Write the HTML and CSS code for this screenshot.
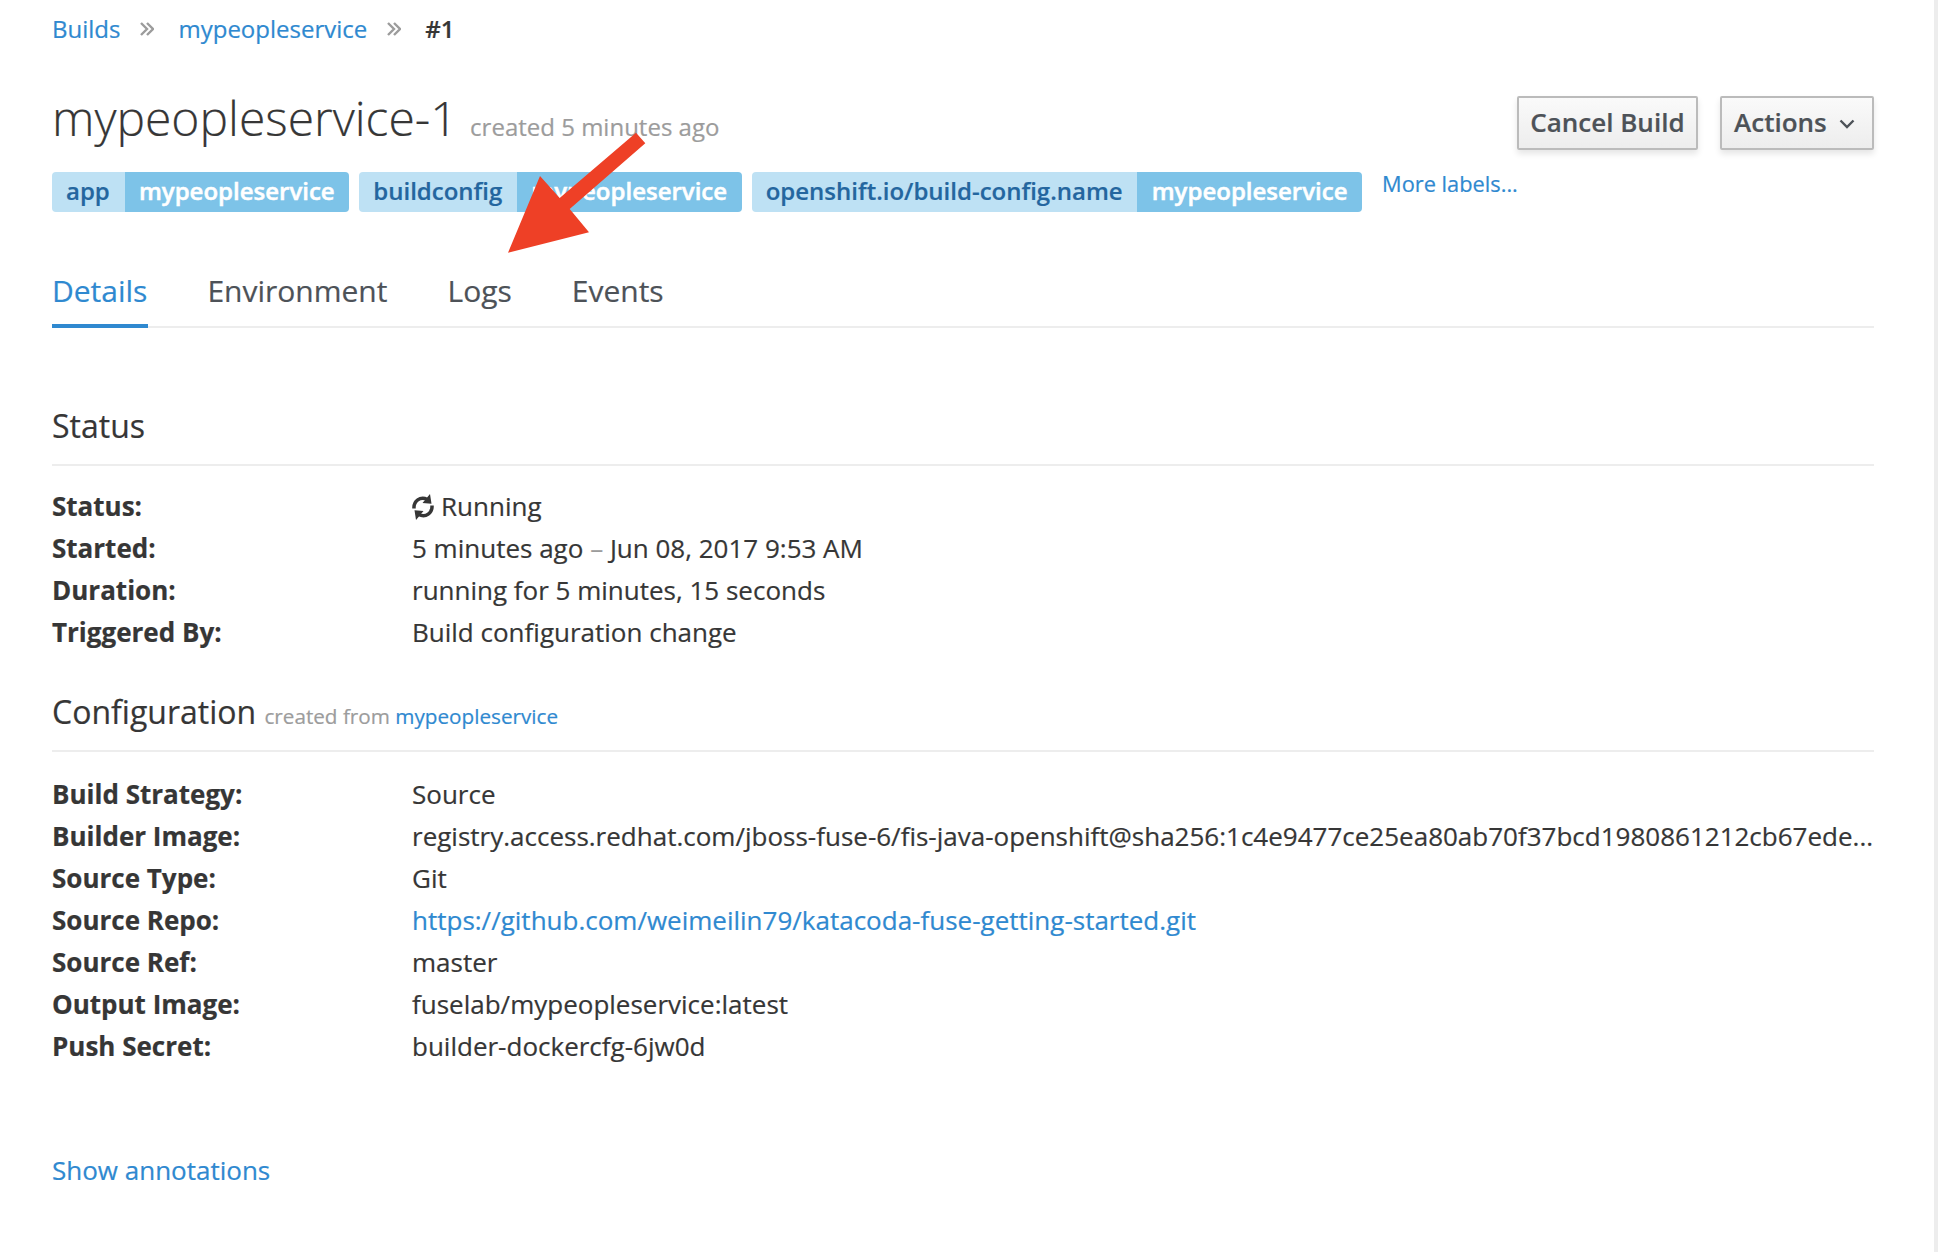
FILE: index.html
```html
<!DOCTYPE html>
<html lang="en">
<head>
<meta charset="utf-8">
<title>mypeopleservice-1</title>
<link rel="stylesheet" href="styles.css">
</head>
<body>
<main class="page">
  <nav class="breadcrumb">
    <a href="#">Builds</a>
    <svg class="sep" viewBox="0 0 14 14"><path d="M1 1l6 6-6 6M7 1l6 6-6 6"/></svg>
    <a href="#">mypeopleservice</a>
    <svg class="sep" viewBox="0 0 14 14"><path d="M1 1l6 6-6 6M7 1l6 6-6 6"/></svg>
    <strong>#1</strong>
  </nav>
  <header class="header">
    <h1 class="title">mypeopleservice-1 <small>created 5 minutes ago</small></h1>
    <div class="actions">
      <button class="btn">Cancel Build</button>
      <button class="btn menu">Actions <svg class="chevron" viewBox="0 0 16 10"><path d="M1.5 1.5L8 8l6.500-6.500"/></svg></button>
    </div>
  </header>
  <div class="labels">
    <span class="label"><span class="key">app</span><span class="val">mypeopleservice</span></span>
    <span class="label"><span class="key">buildconfig</span><span class="val">mypeopleservice</span></span>
    <span class="label"><span class="key">openshift.io/build-config.name</span><span class="val">mypeopleservice</span></span>
    <a class="more" href="#">More labels...</a>
  </div>
  <nav class="tabs">
    <a class="tab active" href="#">Details</a>
    <a class="tab" href="#">Environment</a>
    <a class="tab" href="#">Logs</a>
    <a class="tab" href="#">Events</a>
  </nav>
  <section class="section status">
    <h2>Status</h2>
    <dl>
      <dt>Status:</dt><dd><svg class="refresh" viewBox="0 0 22 26"><path class="arc" d="M2 14.500C1.500 7 8 2 15.500 5.500M20 11.500C20.500 19 14 24 6.500 20.500"/><path class="head" d="M18 0L19.500 9.700 10.500 9zM4 26L2.500 16.300 11.500 17z"/></svg>Running</dd>
      <dt>Started:</dt><dd>5 minutes ago <span class="dash">–</span> Jun 08, 2017 9:53 AM</dd>
      <dt>Duration:</dt><dd>running for 5 minutes, 15 seconds</dd>
      <dt>Triggered By:</dt><dd>Build configuration change</dd>
    </dl>
  </section>
  <section class="section config">
    <h2>Configuration <small>created from <a href="#">mypeopleservice</a></small></h2>
    <dl>
      <dt>Build Strategy:</dt><dd>Source</dd>
      <dt>Builder Image:</dt><dd>registry.access.redhat.com/jboss-fuse-6/fis-java-openshift@sha256:1c4e9477ce25ea80ab70f37bcd1980861212cb67ede...</dd>
      <dt>Source Type:</dt><dd>Git</dd>
      <dt>Source Repo:</dt><dd><a href="#">https://github.com/weimeilin79/katacoda-fuse-getting-started.git</a></dd>
      <dt>Source Ref:</dt><dd>master</dd>
      <dt>Output Image:</dt><dd>fuselab/mypeopleservice:latest</dd>
      <dt>Push Secret:</dt><dd>builder-dockercfg-6jw0d</dd>
    </dl>
  </section>
  <a class="annotations" href="#">Show annotations</a>
</main>
<svg class="pointer" viewBox="0 0 138 121"><path d="M128 .7l9.300 10.600L61.700 77 81 100.200 0 120.700 32 44 51.700 66z"/></svg>
</body>
</html>
```
FILE: styles.css
```css
* { box-sizing: border-box; }
body {
  margin: 0;
  height: 1252px;
  overflow: hidden;
  position: relative;
  background: #fff;
  border-right: 4px solid #ededed;
  color: #363636;
  font: 26px/42px "Open Sans", sans-serif;
  -webkit-text-stroke: .2px;
}
a { color: #2f89d0; text-decoration: none; }
.page { padding: 8px 60px 0 52px; }

.breadcrumb { display: flex; align-items: center; height: 42px; font-size: 24px; }
.breadcrumb strong { font-weight: 600; }
.sep { width: 14px; height: 14px; margin: 0 24px 0 20px; fill: none; stroke: #9c9c9c; stroke-width: 2.400; }

.header { display: flex; justify-content: space-between; height: 122px; padding-top: 46px; }
.title { margin: -2px 0 0; font-size: 48px; font-weight: 300; line-height: 48px; white-space: nowrap; }
.title small { font-size: 24px; font-weight: 400; color: #9c9c9c; }
.actions { display: flex; gap: 22px; }
.btn {
  height: 54px;
  padding: 0 11.500px 2px;
  border: 2px solid #bbb;
  border-radius: 2px;
  background: linear-gradient(#fafafa, #ededed);
  box-shadow: 0 4px 6px rgba(3, 3, 3, .1);
  color: #4d5258;
  font: 600 26px/46px "Open Sans", sans-serif;
  white-space: nowrap;
}
.menu { padding-left: 12px; }
.chevron { width: 16px; height: 10px; margin: 0 6px 3px 5px; fill: none; stroke: #4d5258; stroke-width: 2.4; }

.labels { display: flex; gap: 10px; height: 40px; font-size: 24px; line-height: 38px; }
.label { display: flex; border-radius: 4px; overflow: hidden; font-weight: 600; }
.key { padding: 0 14.800px 0 14px; background: #bee1f4; color: #24669f; }
.val { padding: 0 14.600px 0 14.300px; background: #7dc3e8; color: #fff; -webkit-text-stroke: .5px; }
.more { margin-left: 10px; font-size: 21.800px; line-height: 24px; }

.tabs { display: flex; gap: 59px; height: 116px; padding-top: 58px; border-bottom: 2px solid #ededed; }
.tab { height: 58px; color: #4d5258; font-size: 30px; line-height: 42px; }
.tab.active { padding-right: 1px; border-bottom: 4px solid #2f89d0; color: #2f89d0; }
.tab:nth-child(n+3) { margin-left: 1px; }

.section h2 { margin: 0; font-size: 32px; font-weight: 400; line-height: 40px; border-bottom: 2px solid #ededed; }
.section h2 small { font-size: 20.700px; color: #9c9c9c; }
.status { padding-top: 78px; }
.status h2, .config h2 { height: 60px; }
.config { padding-top: 39px; }
.section dl { display: grid; grid-template-columns: 360px 1fr; margin: 0; padding-top: 19px; }
.config dl { padding-top: 21px; }
dt { font-weight: 700; }
dd { margin: 0; white-space: nowrap; }
.refresh { width: 22px; height: 26px; margin-right: 7px; vertical-align: -4px; }
.refresh .arc { fill: none; stroke: #363636; stroke-width: 3.500; }
.refresh .head { fill: #363636; }
.dash { color: #9c9c9c; }
.annotations { display: block; margin-top: 82px; }
.pointer { position: absolute; left: 508px; top: 132px; width: 138px; height: 121px; fill: #ee4026; }
```
